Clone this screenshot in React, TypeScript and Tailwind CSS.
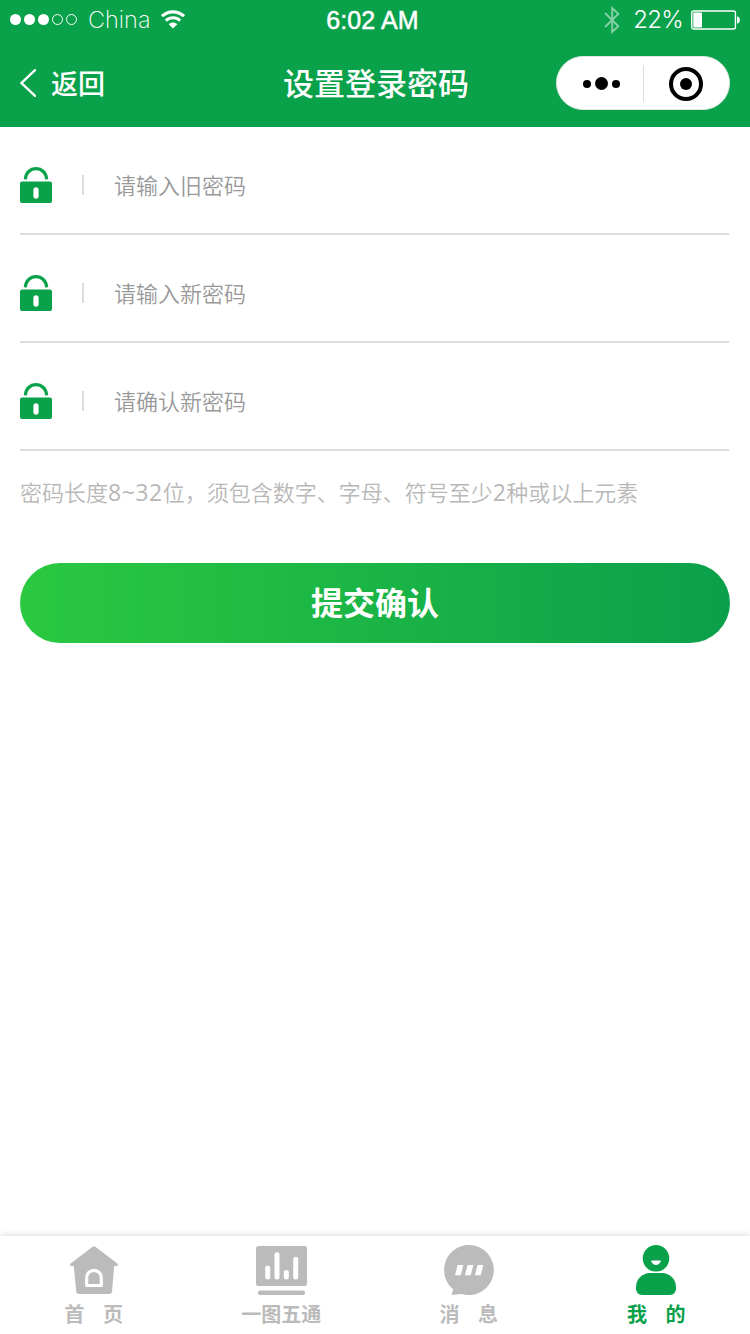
import type { ReactNode } from 'react';
import { clsx } from 'clsx';

interface PasswordFieldProps {
  name: string;
  placeholder: string;
}

interface TabItemProps {
  label: string;
  icon: ReactNode;
  active?: boolean;
}

function WifiIcon() {
  return (
    <svg width="24" height="20" viewBox="0 0 24 20" fill="none">
      <path d="M1 6.200C7.200.4 16.800.4 23 6.200" stroke="white" strokeWidth="3.200" />
      <path d="M4.800 10.600c4.200-3.800 10.200-3.800 14.400 0" stroke="white" strokeWidth="2.900" />
      <path d="M7.700 14.200c2.500-2.300 6.100-2.300 8.600 0L12 18.600z" fill="white" />
    </svg>
  );
}

function BluetoothIcon() {
  return (
    <svg width="16" height="28" viewBox="0 0 16 28" fill="none">
      <path
        d="M1 7 14.300 20.300 8.200 26V2l6.100 6L1 21"
        stroke="white"
        strokeOpacity="0.5"
        strokeWidth="1.900"
      />
    </svg>
  );
}

function BatteryIcon() {
  return (
    <svg width="50" height="20" viewBox="0 0 50 20" fill="none">
      <rect x="0.750" y="1" width="43.700" height="18" rx="2" stroke="white" strokeWidth="1.400" />
      <rect x="2.300" y="2.500" width="8.700" height="15" rx="0.800" fill="white" />
      <path d="M46 6.500c3.800 0 3.800 7 0 7z" fill="white" />
    </svg>
  );
}

function LockIcon() {
  return (
    <svg width="32" height="36" viewBox="0 0 32 36">
      <path d="M5.300 12.300C5.800 5.800 10.300 1.600 16 1.600s10.200 4.200 10.700 10.700" fill="none" stroke="#0aa14b" strokeWidth="3.200" />
      <path
        fillRule="evenodd"
        fill="#0aa14b"
        d="M2 14.500h28a2 2 0 0 1 2 2V34a2 2 0 0 1-2 2H2a2 2 0 0 1-2-2V16.500a2 2 0 0 1 2-2zM16 20.300a2.600 2.600 0 0 0-2.600 2.600v6.200a2.600 2.600 0 0 0 5.200 0v-6.200a2.600 2.600 0 0 0-2.600-2.600z"
      />
    </svg>
  );
}

function HomeIcon() {
  return (
    <svg width="50" height="50" viewBox="0 0 50 50">
      <path
        fill="currentColor"
        d="M23.300 1.900a2.600 2.600 0 0 1 3.400 0L48.300 18.500c1.200 1 .6 2.500-.8 2.500h-2.300l-2.200 25.300a2.900 2.900 0 0 1-2.900 2.700H10.100a2.900 2.900 0 0 1-2.900-2.700L4.800 21H2.500c-1.400 0-2-1.500-.8-2.500z"
      />
      <path d="M17.700 40.500v-7.900a7.300 7.300 0 0 1 14.600 0v7.900z" fill="none" stroke="white" strokeWidth="3.200" strokeLinejoin="round" />
    </svg>
  );
}

function ChartIcon() {
  return (
    <svg width="51" height="50" viewBox="0 0 51 50">
      <rect y="1" width="51" height="40" rx="2.500" fill="currentColor" />
      <rect x="2" y="45.500" width="47" height="4.500" rx="2" fill="currentColor" />
      <g stroke="white" strokeWidth="5" strokeLinecap="round">
        <path d="M11.700 23v9" />
        <path d="M21 9.700V32" />
        <path d="M30.300 27.500V32" />
        <path d="M39.700 14.200V32" />
      </g>
    </svg>
  );
}

function MessageIcon() {
  return (
    <svg width="50" height="50" viewBox="0 0 50 50">
      <path
        fill="currentColor"
        d="M25 0a25 25 0 1 1-7.500 48.900L7.500 50l1.700-5.700A25 25 0 0 1 25 0z"
      />
      <g fill="white">
        <path d="M13.600 20h5.700l-2.600 10.300H11z" />
        <path d="M23.600 20h5.700l-2.600 10.300H21z" />
        <path d="M33.600 20h5.700l-2.600 10.300H31z" />
      </g>
    </svg>
  );
}

function UserIcon() {
  return (
    <svg width="40" height="50" viewBox="0 0 40 50">
      <circle cx="20" cy="13.300" r="13.300" fill="currentColor" />
      <path d="M15.700 15.500h8.600c.5 0 .7.3.5.8-1.500 4.800-8.100 4.800-9.600 0-.2-.5 0-.8.500-.8z" fill="white" />
      <path
        fill="currentColor"
        d="M14 28h12c8 0 14 6.500 14 14v2a6 6 0 0 1-6 6H6a6 6 0 0 1-6-6v-2c0-7.500 6-14 14-14z"
      />
    </svg>
  );
}

function StatusBar() {
  return (
    <div className="flex h-10 items-center justify-between pl-2.5 pr-[9px]">
      <div className="flex w-[252px] items-center">
        <div className="flex gap-[3px] pb-px">
          <span className="size-[11px] rounded-full bg-white" />
          <span className="size-[11px] rounded-full bg-white" />
          <span className="size-[11px] rounded-full bg-white" />
          <span className="size-[11px] rounded-full border border-white" />
          <span className="size-[11px] rounded-full border border-white" />
        </div>
        <span className="ml-[11px] mr-3 w-[61px] font-['Inter'] text-[23.500px] font-extralight leading-10">
          China
        </span>
        <WifiIcon />
      </div>
      <span className="font-['Liberation_Sans'] text-[25px] leading-[38px] tracking-[0.1px] [-webkit-text-stroke:0.5px_white]">
        6:02 AM
      </span>
      <div className="flex w-[258px] items-center justify-end">
        <BluetoothIcon />
        <span className="ml-[13px] mr-2 font-['Inter'] text-2xl font-light leading-10 tracking-[-0.7px]">
          22%
        </span>
        <BatteryIcon />
      </div>
    </div>
  );
}

function Header() {
  return (
    <header className="h-[127px] bg-[#0aa14b] text-white">
      <StatusBar />
      <div className="flex h-[86px] items-center justify-between px-5">
        <button className="flex w-[174px] items-center gap-[15px]">
          <svg width="16" height="28" viewBox="0 0 16 28" fill="none">
            <path d="M15 1.200 1.500 14 15 26.800" stroke="white" strokeWidth="2.400" strokeLinecap="round" />
          </svg>
          <span className="pb-px text-[27px] font-medium leading-8">返回</span>
        </button>
        <h1 className="pb-0.5 pl-0.5 text-[31px] font-medium leading-10">设置登录密码</h1>
        <div className="flex h-[54px] w-[174px] items-center rounded-full border border-[#dfe9e2] bg-white">
          <button className="flex w-[86px] items-center justify-center gap-1 pl-[3px] pt-px">
            <span className="size-2 rounded-full bg-black" />
            <span className="size-[13px] rounded-full bg-black" />
            <span className="size-2 rounded-full bg-black" />
          </button>
          <span className="h-[37px] w-px bg-[#dcdcdc]" />
          <button className="flex flex-1 justify-center pr-px pt-px">
            <span className="flex size-[34px] items-center justify-center rounded-full border-4 border-black">
              <span className="size-3 rounded-full bg-black" />
            </span>
          </button>
        </div>
      </div>
    </header>
  );
}

function PasswordField({ name, placeholder }: PasswordFieldProps) {
  return (
    <label className="mr-px flex h-[108px] items-center border-b-2 border-[#dcdcdc] pb-[30px] pt-10">
      <LockIcon />
      <span className="ml-[30px] h-5 w-0.5 bg-[#dcdcdc]" />
      <input
        type="password"
        name={name}
        placeholder={placeholder}
        className="ml-[30px] h-9 flex-1 pb-[3px] text-[22px] font-[350] outline-none placeholder:text-[#999999]"
      />
    </label>
  );
}

function TabItem({ label, icon, active }: TabItemProps) {
  return (
    <button
      className={clsx(
        'flex flex-1 flex-col items-center pt-[9px]',
        active ? 'text-[#0aa14b]' : 'text-[#bbbbbb]'
      )}
    >
      {icon}
      <span className="mt-1 text-xl font-bold leading-[30px] [word-spacing:14px]">{label}</span>
    </button>
  );
}

export default function App() {
  return (
    <div className="flex h-[1334px] w-[750px] flex-col bg-white font-['Noto_Sans_CJK_SC',sans-serif]">
      <Header />
      <main className="flex-1 px-5">
        <PasswordField name="oldPassword" placeholder="请输入旧密码" />
        <PasswordField name="newPassword" placeholder="请输入新密码" />
        <PasswordField name="confirmPassword" placeholder="请确认新密码" />
        <p className="mt-6 h-8 whitespace-nowrap text-[22px] font-[350] leading-8 text-[#b8b8b8]">
          密码长度
          <span className="font-['Open_Sans'] text-[23px] font-normal leading-8 tracking-[0.5px]">8~32</span>
          位，须包含数字、字母、符号至少
          <span className="font-['Open_Sans'] text-[23px] font-normal leading-8 tracking-[0.5px]">2</span>
          种或以上元素
        </p>
        <button className="mt-14 h-20 w-full rounded-full bg-linear-to-r/srgb from-[#2ac940] to-[#0aa04b] pb-1 text-[32px] font-bold text-white">
          提交确认
        </button>
      </main>
      <nav className="flex h-[98px] bg-white shadow-[0_-1px_6px_rgba(0,0,0,0.15)]">
        <TabItem label="首 页" icon={<HomeIcon />} />
        <TabItem label="一图五通" icon={<ChartIcon />} />
        <TabItem label="消 息" icon={<MessageIcon />} />
        <TabItem label="我 的" icon={<UserIcon />} active />
      </nav>
    </div>
  );
}
